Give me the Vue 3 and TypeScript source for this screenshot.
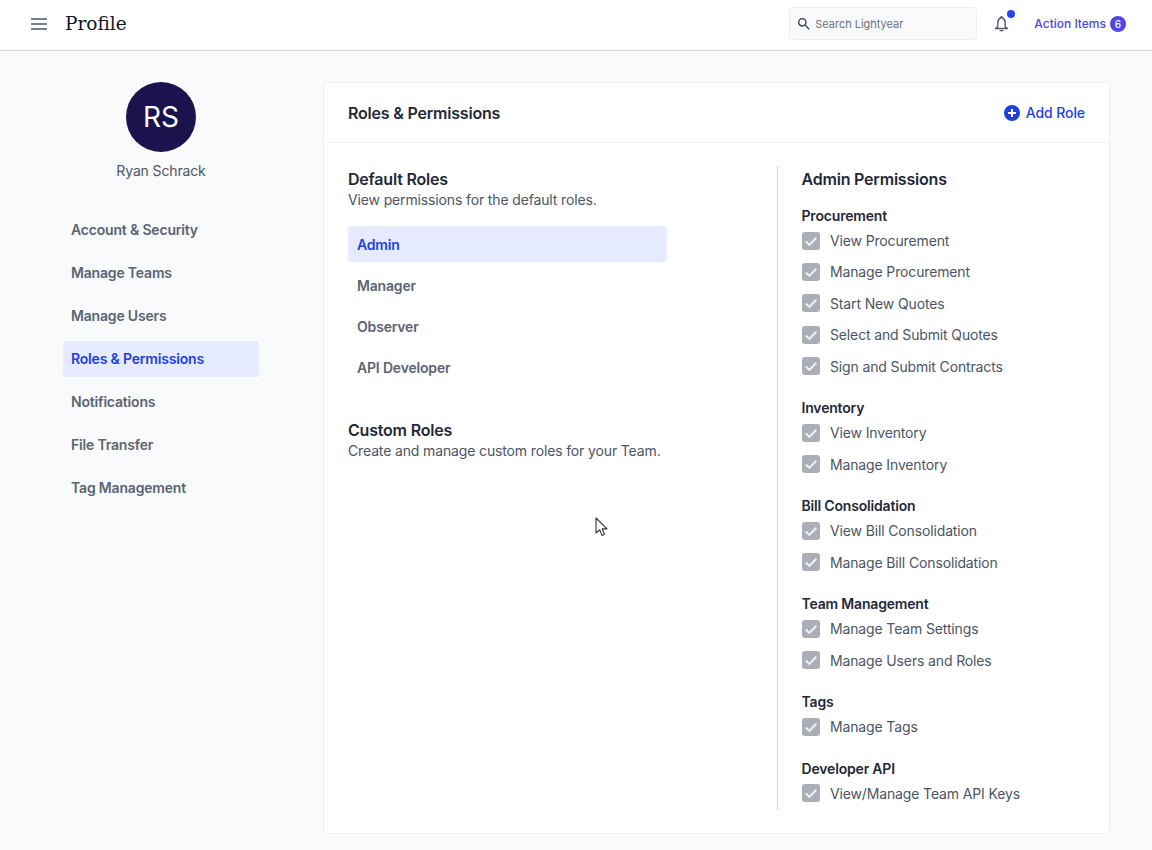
<script setup lang="ts">
const navItems = [
  'Account & Security',
  'Manage Teams',
  'Manage Users',
  'Roles & Permissions',
  'Notifications',
  'File Transfer',
  'Tag Management',
]
const roles = ['Admin', 'Manager', 'Observer', 'API Developer']
const groups = [
  { title: 'Procurement', items: ['View Procurement', 'Manage Procurement', 'Start New Quotes', 'Select and Submit Quotes', 'Sign and Submit Contracts'] },
  { title: 'Inventory', items: ['View Inventory', 'Manage Inventory'] },
  { title: 'Bill Consolidation', items: ['View Bill Consolidation', 'Manage Bill Consolidation'] },
  { title: 'Team Management', items: ['Manage Team Settings', 'Manage Users and Roles'] },
  { title: 'Tags', items: ['Manage Tags'] },
  { title: 'Developer API', items: ['View/Manage Team API Keys'] },
]
</script>

<template>
  <div class="page">
    <header class="topbar">
      <div class="topbar-left">
        <svg class="menu-icon" viewBox="0 0 16 12" width="16" height="12">
          <path d="M0 1h16M0 6h16M0 11h16" stroke="#4b5563" stroke-width="1.6" fill="none" />
        </svg>
        <h1 class="page-title">Profile</h1>
      </div>
      <div class="topbar-right">
        <div class="search">
          <svg viewBox="0 0 24 24" width="16" height="16" fill="#374151">
            <path d="M15.500 14h-.79l-.28-.27A6.471 6.471 0 0 0 16 9.500 6.500 6.500 0 1 0 9.500 16c1.610 0 3.090-.59 4.230-1.570l.27.28v.79l5 4.990L20.490 19l-4.990-5zm-6 0C7.010 14 5 11.990 5 9.500S7.010 5 9.500 5 14 7.010 14 9.500 11.990 14 9.500 14z" />
          </svg>
          <span>Search Lightyear</span>
        </div>
        <div class="bell">
          <svg viewBox="0 0 24 24" width="17" height="17" fill="none" stroke="#4b5563" stroke-width="1.900" stroke-linejoin="round">
            <path d="M12 2.500a1 1 0 0 0-1 1v.6C8.500 5 6.800 7.600 6.800 10.500v6L3.500 19h17l-3.300-2.500v-6C17.200 7.600 15.500 5 13 4.100v-.6a1 1 0 0 0-1-1z" />
            <path d="M10 22h4" stroke-linecap="round" />
          </svg>
          <span class="bell-dot"></span>
        </div>
        <div class="action-items">
          <span>Action Items</span>
          <span class="badge">6</span>
        </div>
      </div>
    </header>

    <div class="content">
      <aside class="sidebar">
        <div class="avatar">RS</div>
        <div class="user-name">Ryan Schrack</div>
        <nav class="side-nav">
          <a
            v-for="item in navItems"
            :key="item"
            class="nav-item"
            :class="{ active: item === 'Roles & Permissions' }"
          >{{ item }}</a>
        </nav>
      </aside>

      <main class="card">
        <div class="card-header">
          <h2>Roles &amp; Permissions</h2>
          <div class="add-role">
            <svg viewBox="0 0 16 16" width="16" height="16">
              <circle cx="8" cy="8" r="8" fill="#1d3fe0" />
              <path d="M8 4v8M4 8h8" stroke="#fff" stroke-width="2" />
            </svg>
            <span>Add Role</span>
          </div>
        </div>
        <div class="card-body">
          <section class="roles">
            <h3>Default Roles</h3>
            <p>View permissions for the default roles.</p>
            <ul class="role-list">
              <li
                v-for="role in roles"
                :key="role"
                class="role"
                :class="{ active: role === 'Admin' }"
              >{{ role }}</li>
            </ul>
            <h3 class="custom-title">Custom Roles</h3>
            <p>Create and manage custom roles for your Team.</p>
          </section>
          <section class="permissions">
            <h3>Admin Permissions</h3>
            <div v-for="group in groups" :key="group.title" class="group">
              <h4>{{ group.title }}</h4>
              <div v-for="item in group.items" :key="item" class="perm">
                <span class="check">
                  <svg viewBox="0 0 18 18" width="18" height="18" fill="none">
                    <path d="M3.800 9.500l3.600 3.400L14.300 5.700" stroke="#f1f2f4" stroke-width="2" />
                  </svg>
                </span>
                <span>{{ item }}</span>
              </div>
            </div>
          </section>
        </div>
      </main>
    </div>

    <svg class="cursor" viewBox="0 0 14 20" width="14" height="20">
      <path d="M1 1v15l3.600-3.200 2.400 5.600 2.500-1.100-2.400-5.400H12z" fill="#fff" stroke="#333" stroke-width="1.100" stroke-linejoin="round" />
    </svg>
  </div>
</template>

<style>
html,
body {
  margin: 0;
  background: #f9fafb;
}
</style>

<style scoped>
.page {
  position: relative;
  height: 850px;
  overflow: hidden;
  background: #f9fafb;
  font-family: Inter, "Liberation Sans", sans-serif;
  color: #4b5563;
  font-size: 14px;
  letter-spacing: -0.14px;
}
.topbar {
  height: 47px;
  box-sizing: content-box;
  display: flex;
  align-items: center;
  justify-content: space-between;
  background: #fff;
  border-bottom: 1px solid #d1d5db;
  padding: 0 26px 3px 31px;
}
.topbar-left {
  display: flex;
  align-items: center;
  gap: 18px;
}
.menu-icon {
  display: block;
}
.page-title {
  margin: 0;
  font-family: "DejaVu Serif", serif;
  font-size: 18.500px;
  font-weight: 400;
  letter-spacing: 0;
  color: #111827;
}
.topbar-right {
  display: flex;
  align-items: center;
}
.search {
  width: 188px;
  height: 33px;
  box-sizing: border-box;
  display: flex;
  align-items: center;
  gap: 3px;
  padding-left: 6px;
  background: #f9fafb;
  border: 1px solid #eceef1;
  border-radius: 4px;
  font-size: 11px;
  letter-spacing: -0.02px;
  color: #6b7280;
}
.bell {
  position: relative;
  margin-left: 16px;
  width: 17px;
  height: 17px;
}
.bell svg {
  display: block;
}
.bell-dot {
  position: absolute;
  top: -5px;
  right: -5px;
  width: 8px;
  height: 8px;
  border-radius: 50%;
  background: #2447f0;
}
.action-items {
  display: flex;
  align-items: center;
  gap: 4px;
  margin-left: 24px;
  font-size: 12px;
  letter-spacing: 0;
  font-weight: 500;
  color: #4f46e5;
}
.badge {
  width: 16px;
  height: 16px;
  border-radius: 50%;
  background: #4f46e5;
  color: #fff;
  font-size: 10px;
  display: flex;
  align-items: center;
  justify-content: center;
}
.content {
  display: flex;
  gap: 64px;
  padding: 31px 42px 0 63px;
}
.sidebar {
  width: 196px;
  flex: none;
  display: flex;
  flex-direction: column;
  align-items: center;
}
.avatar {
  width: 70px;
  height: 70px;
  border-radius: 50%;
  background: #1a134d;
  color: #fff;
  font-size: 28px;
  letter-spacing: 0;
  display: flex;
  align-items: center;
  justify-content: center;
}
.user-name {
  margin-top: 9px;
  line-height: 20px;
  color: #4b5563;
}
.side-nav {
  align-self: stretch;
  display: flex;
  flex-direction: column;
  gap: 7px;
  margin-top: 31px;
}
.nav-item {
  height: 36px;
  line-height: 36px;
  padding: 0 8px;
  border-radius: 4px;
  font-weight: 600;
  letter-spacing: -0.18px;
  color: #5b6472;
}
.nav-item.active {
  background: #e5ebfc;
  color: #1d3fe0;
}
.card {
  flex: 1;
  height: 752px;
  box-sizing: border-box;
  background: #fff;
  border: 1px solid #eef0f2;
  border-radius: 4px;
}
.card-header {
  height: 60px;
  box-sizing: border-box;
  display: flex;
  align-items: center;
  justify-content: space-between;
  padding: 0 24px;
  border-bottom: 1px solid #eef0f2;
}
.card-header h2 {
  margin: 0;
  font-size: 16px;
  font-weight: 600;
  letter-spacing: -0.2px;
  color: #1f2937;
}
.add-role {
  display: flex;
  align-items: center;
  gap: 6px;
  font-size: 14px;
  font-weight: 500;
  letter-spacing: -0.1px;
  color: #1d3fe0;
}
.add-role svg {
  display: block;
}
.card-body {
  display: flex;
  padding: 23px 24px 24px;
}
.roles {
  width: 429px;
  flex: none;
  padding-top: 1px;
}
h3 {
  margin: 0;
  font-size: 16px;
  line-height: 24px;
  font-weight: 600;
  letter-spacing: -0.2px;
  color: #1f2937;
}
.roles p {
  margin: -1px 0 0;
  line-height: 20px;
  color: #4b5563;
}
.role-list {
  list-style: none;
  margin: 16px 0 0;
  padding: 0;
  width: 319px;
  display: flex;
  flex-direction: column;
  gap: 5px;
}
.role {
  height: 36px;
  line-height: 37px;
  padding: 0 9px;
  border-radius: 4px;
  font-weight: 600;
  letter-spacing: -0.18px;
  color: #5b6472;
}
.role.active {
  background: #e5ebfc;
  color: #1d3fe0;
}
.custom-title {
  margin-top: 33px;
}
.permissions {
  flex: 1;
  height: 644px;
  box-sizing: border-box;
  padding: 1px 0 0 23.500px;
  border-left: 1px solid #d1d5db;
}
.group {
  margin-top: 22.100px;
}
.permissions > h3 + .group {
  margin-top: 15px;
}
h4 {
  margin: 0 0 4.500px;
  font-size: 14px;
  line-height: 20px;
  font-weight: 600;
  letter-spacing: -0.18px;
  color: #1f2937;
}
.perm {
  display: flex;
  align-items: center;
  gap: 10.500px;
  height: 20px;
  color: #4b5563;
}
.perm + .perm {
  margin-top: 11.400px;
}
.check {
  width: 18px;
  height: 18px;
  border-radius: 3px;
  background: #abaeb8;
  flex: none;
}
.check svg {
  display: block;
}
.cursor {
  position: absolute;
  left: 595px;
  top: 517px;
}
</style>
